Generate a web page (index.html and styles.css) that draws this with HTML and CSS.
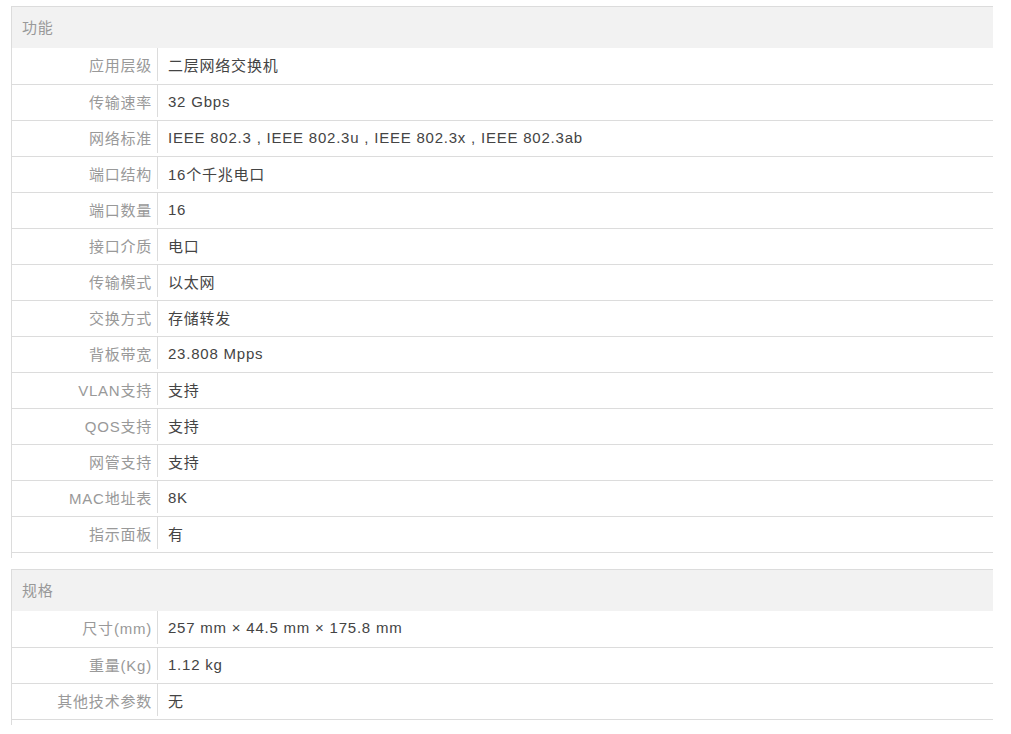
FILE: index.html
```html
<!DOCTYPE html>
<html lang="zh-CN">
<head>
<meta charset="utf-8">
<title>参数</title>
<link rel="stylesheet" href="styles.css">
</head>
<body>
<div class="page">
  <section class="spec">
    <div class="spec-head">功能</div>
    <div class="row"><div class="label">应用层级</div><div class="value">二层网络交换机</div></div>
    <div class="row"><div class="label">传输速率</div><div class="value">32 Gbps</div></div>
    <div class="row"><div class="label">网络标准</div><div class="value">IEEE 802.3 , IEEE 802.3u , IEEE 802.3x , IEEE 802.3ab</div></div>
    <div class="row"><div class="label">端口结构</div><div class="value">16个千兆电口</div></div>
    <div class="row"><div class="label">端口数量</div><div class="value">16</div></div>
    <div class="row"><div class="label">接口介质</div><div class="value">电口</div></div>
    <div class="row"><div class="label">传输模式</div><div class="value">以太网</div></div>
    <div class="row"><div class="label">交换方式</div><div class="value">存储转发</div></div>
    <div class="row"><div class="label">背板带宽</div><div class="value">23.808 Mpps</div></div>
    <div class="row"><div class="label">VLAN支持</div><div class="value">支持</div></div>
    <div class="row"><div class="label">QOS支持</div><div class="value">支持</div></div>
    <div class="row"><div class="label">网管支持</div><div class="value">支持</div></div>
    <div class="row"><div class="label">MAC地址表</div><div class="value">8K</div></div>
    <div class="row"><div class="label">指示面板</div><div class="value">有</div></div>
  </section>
  <section class="spec">
    <div class="spec-head">规格</div>
    <div class="row"><div class="label">尺寸(mm)</div><div class="value">257 mm × 44.5 mm × 175.8 mm</div></div>
    <div class="row"><div class="label">重量(Kg)</div><div class="value">1.12 kg</div></div>
    <div class="row"><div class="label">其他技术参数</div><div class="value">无</div></div>
  </section>
</div>
</body>
</html>
```
FILE: styles.css
```css
html, body {
  margin: 0;
  padding: 0;
  background: #fff;
}
body {
  font-family: "Liberation Sans", "Noto Sans CJK SC", sans-serif;
  font-size: 15px;
  letter-spacing: 0.78px;
}
.page {
  padding: 6px 0 0 11px;
  width: 982px;
}
.spec {
  border-left: 1px solid #dcdcdc;
  border-top: 1px solid #dcdcdc;
  padding-bottom: 5px;
  margin-bottom: 11px;
}
.spec-head {
  height: 41px;
  line-height: 41px;
  background: #f2f2f2;
  color: #999;
  padding-left: 10px;
}
.row {
  display: flex;
  height: 35px;
  border-bottom: 1px solid #dcdcdc;
}
.spec-head + .row {
  height: 36px;
}
.label {
  width: 140px;
  padding-right: 5px;
  color: #999;
  display: flex;
  align-items: center;
  justify-content: flex-end;
  border-right: 1px solid #dcdcdc;
  margin-bottom: 3px;
}
.value {
  flex: 1;
  padding-left: 10px;
  padding-bottom: 3px;
  color: #444;
  display: flex;
  align-items: center;
}
```
